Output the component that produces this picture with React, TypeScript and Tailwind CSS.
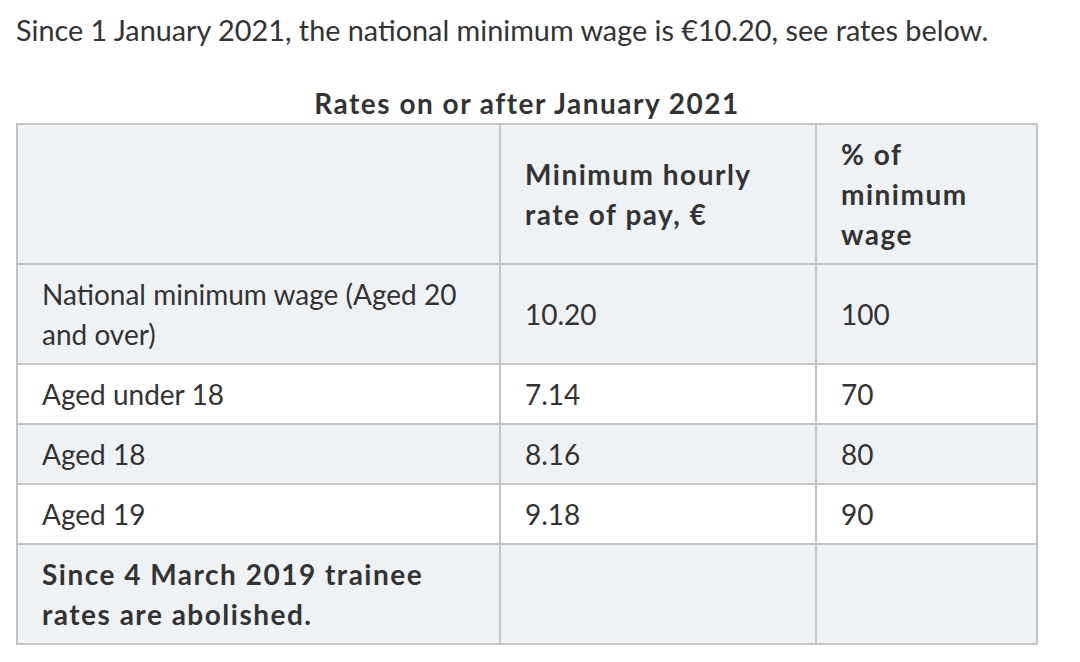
const rows = [
  { label: "National minimum wage (Aged 20 and over)", rate: "10.20", pct: "100" },
  { label: "Aged under 18", rate: "7.14", pct: "70" },
  { label: "Aged 18", rate: "8.16", pct: "80" },
  { label: "Aged 19", rate: "9.18", pct: "90" },
];

const cell = "border-2 border-[#c4c4c4] px-6 py-[9px] align-middle";

export default function App() {
  return (
    <div className="min-h-[662px] bg-white px-4 pt-[12px] font-['Lato',sans-serif] text-[#333]">
      <p className="text-[28.8px] leading-[36px]">
        Since 1 January 2021, the national minimum wage is €10.20, see rates below.
      </p>

      <table className="mt-[37px] w-[1020px] table-fixed border-collapse text-left text-[28px] leading-[40px]">
        <caption className="pb-[2px] text-center text-[28px] font-bold leading-[36px] tracking-[1.5px]">
          Rates on or after January 2021
        </caption>
        <colgroup>
          <col className="w-[483px]" />
          <col className="w-[316px]" />
          <col className="w-[221px]" />
        </colgroup>
        <thead>
          <tr className="bg-[#eff2f5]">
            <th className={cell}></th>
            <th className={`${cell} font-bold tracking-[1.5px]`}>Minimum hourly rate of pay, €</th>
            <th className={`${cell} font-bold tracking-[1.5px]`}>% of minimum wage</th>
          </tr>
        </thead>
        <tbody>
          {rows.map((r, i) => (
            <tr key={r.label} className={i % 2 === 0 ? "bg-[#eff2f5]" : "bg-white"}>
              <td className={i === 0 ? `${cell} py-[8.5px]` : cell}>{r.label}</td>
              <td className={cell}>{r.rate}</td>
              <td className={cell}>{r.pct}</td>
            </tr>
          ))}
          <tr className="bg-[#eff2f5]">
            <td className={`${cell} font-bold tracking-[1.5px]`}>Since 4 March 2019 trainee rates are abolished.</td>
            <td className={cell}></td>
            <td className={cell}></td>
          </tr>
        </tbody>
      </table>
    </div>
  );
}
